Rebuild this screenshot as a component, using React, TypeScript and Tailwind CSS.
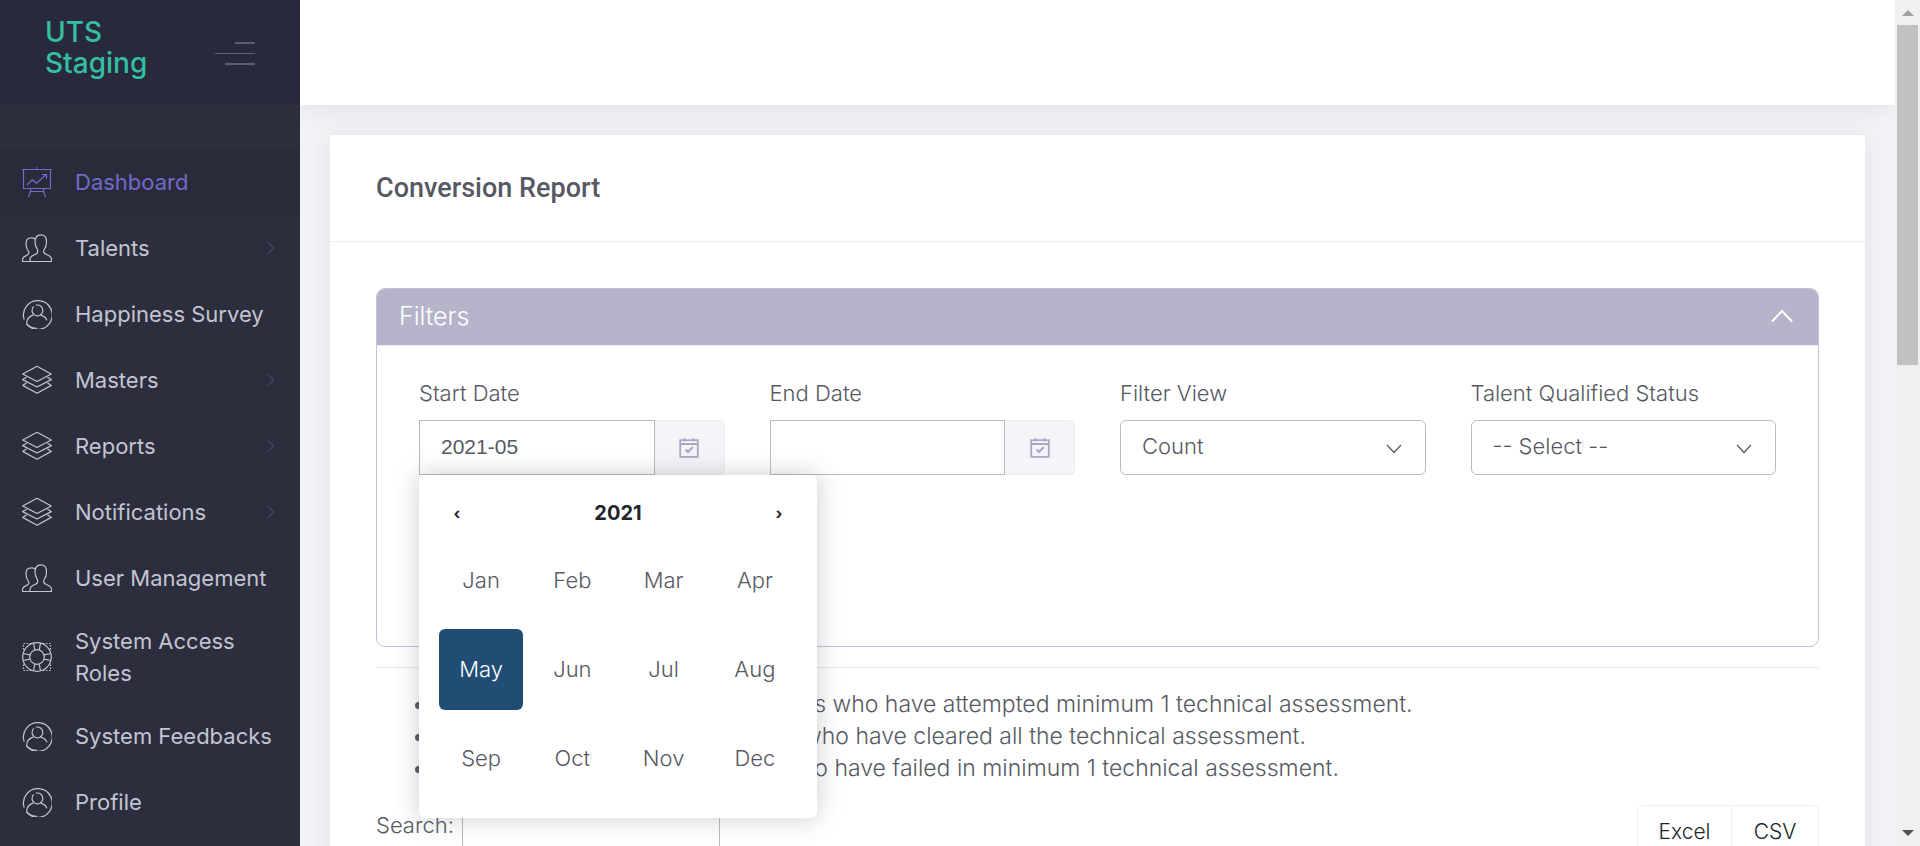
import React from "react";

type IconProps = { className?: string };

function Svg({ children, className }: { children: React.ReactNode; className?: string }) {
  return (
    <svg
      viewBox="0 0 30 30"
      width="30"
      height="30"
      fill="none"
      stroke="currentColor"
      strokeWidth="1.2"
      strokeLinejoin="round"
      aria-hidden="true"
      className={className}
    >
      {children}
    </svg>
  );
}

const BoardIcon = ({ className }: IconProps) => (
  <Svg className={className}>
    <path d="M0 2.5H30M1.5 2.5V21.5H28.5V2.5M14 1H16" />
    <path d="M5 18L9.5 13.5Q10.5 12.5 11.5 13.5L13.5 15.5Q14.5 16.5 15.5 15.5L24 7.5M20 7.5H24.5V12" />
    <path d="M8.5 21.5V24.5H21.5V21.5M8.5 24.5L6.5 30M21.5 24.5L23.5 30" />
  </Svg>
);

const UsersIcon = ({ className }: IconProps) => (
  <Svg className={className}>
    <path d="M8 28.5H29.5V26.5C29.5 24 27 22.5 24.5 21.5C22 20.5 21 19 22 17C23.5 15 24.5 12.5 24.5 9C24.5 4 23 1.8 18.8 1.8C14.5 1.8 13 4 13 9C13 12.5 14.5 15 15.5 17C16.3 19 15.5 20.5 13 21.5C10 22.7 8 23.5 8 26Z" />
    <path d="M8 28.5H0.5V26.5C0.5 24 2.5 23.3 4.5 22.5C6.5 21.5 7.3 20 6.5 18.5C5 16.5 4 14 4 10.5C4 6.5 6 4.8 9.5 4.8C11 4.8 12 5 13.2 5.8" />
  </Svg>
);

const UserCircleIcon = ({ className }: IconProps) => (
  <Svg className={className}>
    <path d="M2.2 20.6A14.4 14.4 0 1 1 4.6 25C4.6 20.5 7.5 17.2 11.2 16.2" />
    <path d="M4.6 25A14.4 14.4 0 0 0 15 29.4" />
    <path d="M18.8 16.2C21.6 17 24 18.8 25 21.4" />
    <path d="M14 6.2A5.4 5.4 0 1 1 11.8 7.4" />
  </Svg>
);

const LayersIcon = ({ className }: IconProps) => (
  <Svg className={className}>
    <path d="M15 1.3L29.3 9L15 16.5L0.7 9Z" />
    <path d="M4.6 12.2L0.7 14.6L15 22L29.3 14.6L25.4 12.2" />
    <path d="M4.6 17.8L0.7 20.4L15 28.2L29.3 20.4L25.4 17.8" />
  </Svg>
);

const LifebuoyIcon = ({ className }: IconProps) => (
  <Svg className={className}>
    <circle cx="15" cy="15" r="14.3" />
    <circle cx="15" cy="15" r="7.3" />
    <path d="M11.5 1.2L12.8 8M18.5 1.2L17.2 8M11.5 28.8L12.8 22M18.5 28.8L17.2 22M1.2 11.5L8 12.8M1.2 18.5L8 17.2M28.8 11.5L22 12.8M28.8 18.5L22 17.2" />
    <path
      strokeDasharray="1.5 1.5"
      d="M9 1.5H1.5V9M21 1.5H28.5V9M9 28.5H1.5V21M21 28.5H28.5V21"
    />
  </Svg>
);

const ChevronRight = () => (
  <svg viewBox="0 0 8 12" width="8" height="12" fill="none" stroke="currentColor" aria-hidden="true">
    <path d="M1 0.5L6.5 6L1 11.5" />
  </svg>
);

const ChevronDown = () => (
  <svg
    viewBox="0 0 16 10"
    width="16"
    height="10"
    fill="none"
    stroke="#575962"
    strokeWidth="1.2"
    aria-hidden="true"
    className="pointer-events-none absolute top-6 right-6"
  >
    <path d="M1 1L8 8.5L15 1" />
  </svg>
);

const CalendarIcon = () => (
  <svg viewBox="0 0 20 20" width="20" height="20" fill="none" stroke="#a9a7c4" strokeWidth="1.8" aria-hidden="true">
    <path d="M1.2 2.2H18.8V18.8H1.2ZM1 6H19M5.5 0V3.5M14.5 0V3.5" />
    <path strokeWidth="2" d="M6.5 11.5L9 14L13.8 9" />
  </svg>
);

type NavItem = { label: string; icon: React.ComponentType<IconProps>; arrow?: boolean; active?: boolean };

const navItems: NavItem[] = [
  { label: "Dashboard", icon: BoardIcon, active: true },
  { label: "Talents", icon: UsersIcon, arrow: true },
  { label: "Happiness Survey", icon: UserCircleIcon },
  { label: "Masters", icon: LayersIcon, arrow: true },
  { label: "Reports", icon: LayersIcon, arrow: true },
  { label: "Notifications", icon: LayersIcon, arrow: true },
  { label: "User Management", icon: UsersIcon },
  { label: "System Access Roles", icon: LifebuoyIcon },
  { label: "System Feedbacks", icon: UserCircleIcon },
  { label: "Profile", icon: UserCircleIcon },
];

function Sidebar() {
  return (
    <aside className="flex w-[300px] shrink-0 flex-col bg-[#2c2e3e]">
      <div className="flex h-[105px] shrink-0 items-start justify-between bg-[#282a3c] pr-[45px] pl-[45px]">
        <a href="#home" className="w-[120px] pt-[17px] text-[28px] leading-[31px] font-medium text-[#34bfa3]">
          UTS Staging
        </a>
        <button type="button" aria-label="Toggle menu" className="mt-[42px] flex w-10 flex-col items-end text-[#5d5c75]">
          <span className="h-0.5 w-5 bg-current" />
          <span className="mt-[9px] h-px w-10 bg-current" />
          <span className="mt-[9px] h-0.5 w-[30px] bg-current" />
        </button>
      </div>
      <nav className="pt-[45px]">
        <ul>
          {navItems.map(({ label, icon: Icon, arrow, active }) => (
            <li key={label}>
              <a
                href={`#${label.toLowerCase().replace(/ /g, "-")}`}
                className={
                  active
                    ? "flex min-h-[66px] items-center bg-[#292b3a] pt-[13px] pb-[15px] pr-[25px] pl-[22px] text-[#716aca]"
                    : "flex min-h-[66px] items-center pt-[13px] pb-[15px] pr-[25px] pl-[22px] text-[#c3c4d2]"
                }
              >
                <Icon className="shrink-0" />
                <span
                  className={
                    label === "System Access Roles"
                      ? "ml-[23px] w-[175px] text-[22px] leading-8"
                      : "ml-[23px] flex-1 text-[22px] leading-8 whitespace-nowrap"
                  }
                >
                  {label}
                </span>
                {arrow && (
                  <span className="text-[#525672]">
                    <ChevronRight />
                  </span>
                )}
              </a>
            </li>
          ))}
        </ul>
      </nav>
    </aside>
  );
}

const months = ["Jan", "Feb", "Mar", "Apr", "May", "Jun", "Jul", "Aug", "Sep", "Oct", "Nov", "Dec"];

function MonthPicker() {
  return (
    <div className="absolute top-full left-0 z-10 w-[398px] rounded-md bg-white px-5 pt-3 pb-[19px] shadow-[0_0_23px_1px_rgba(69,65,78,0.25)]">
      <div className="flex h-[52px] items-center justify-between px-3 text-[#212529]">
        <button type="button" aria-label="Previous year" className="w-3 text-[16px] font-bold">
          ‹
        </button>
        <button type="button" className="text-[20px] font-bold">
          2021
        </button>
        <button type="button" aria-label="Next year" className="w-3 text-[16px] font-bold">
          ›
        </button>
      </div>
      <div className="grid grid-cols-4 gap-x-[7px] gap-y-2 pt-px">
        {months.map((m) => (
          <button
            type="button"
            key={m}
            className={
              m === "May"
                ? "h-[81px] rounded-md bg-[#204d74] text-white"
                : "h-[81px] rounded-md font-light text-[#575962]"
            }
          >
            {m}
          </button>
        ))}
      </div>
    </div>
  );
}

function DateField({ id, label, value, open }: { id: string; label: string; value: string; open?: boolean }) {
  return (
    <div>
      <label htmlFor={id} className="block leading-8">
        {label}
      </label>
      <div className="relative mt-[11px] flex h-[55px]">
        <input
          id={id}
          defaultValue={value}
          className="min-w-0 flex-1 border border-[#b9bac6] bg-white px-[21px] pb-0.5 font-['Liberation_Sans',sans-serif] text-[21px] font-normal text-[#575962] outline-none"
        />
        <button
          type="button"
          aria-label={`Open ${label} calendar`}
          className="flex w-[70px] shrink-0 items-center justify-center rounded-r-md border border-l-0 border-[#ebedf2] bg-[#f4f5f8]"
        >
          <CalendarIcon />
        </button>
        {open && <MonthPicker />}
      </div>
    </div>
  );
}

function SelectField({ id, label, option }: { id: string; label: string; option: string }) {
  return (
    <div>
      <label htmlFor={id} className="block leading-8">
        {label}
      </label>
      <div className="relative mt-[11px]">
        <select
          id={id}
          className="h-[55px] w-full appearance-none rounded-md border border-[#b9bac6] bg-white px-[21px] pb-0.5 font-light outline-none"
        >
          <option>{option}</option>
        </select>
        <ChevronDown />
      </div>
    </div>
  );
}

function NoteList() {
  return (
    <ul className="mt-5 list-disc pl-[60px] text-[23px] leading-8 whitespace-nowrap">
      <li>
        <span className="inline-block w-[390px] text-right">Talents</span> who have attempted minimum 1 technical
        assessment.
      </li>
      <li>
        <span className="inline-block w-[367px]" />
        who have cleared all the technical assessment.
      </li>
      <li>
        <span className="inline-block w-[346px]" />
        who have failed in minimum 1 technical assessment.
      </li>
    </ul>
  );
}

function Scrollbar() {
  return (
    <div className="flex w-[25px] shrink-0 flex-col items-center bg-[#f0f0f0] pb-2.5" aria-hidden="true">
      <svg viewBox="0 0 12 6" width="12" height="6" className="mt-[10px] mb-[9px] shrink-0" fill="#a0a0a0">
        <path d="M0 6L6 0L12 6Z" />
      </svg>
      <div className="h-[340px] w-[21px] shrink-0 bg-[#c1c1c1]" />
      <svg viewBox="0 0 12 6" width="12" height="6" className="mt-auto shrink-0" fill="#505050">
        <path d="M0 0L6 6L12 0Z" />
      </svg>
    </div>
  );
}

export default function App() {
  return (
    <div className="flex h-screen overflow-hidden bg-[#f2f3f8] font-[Inter,sans-serif] text-[22px] text-[#575962]">
      <Sidebar />
      <div className="flex min-w-0 flex-1 flex-col overflow-hidden">
        <header className="h-[105px] shrink-0 bg-white shadow-[0_1px_23px_1px_rgba(69,65,78,0.1)]" />
        <main className="p-[30px]">
          <section className="bg-white shadow-[0_1px_23px_1px_rgba(69,65,78,0.08)]">
            <div className="flex h-[107px] items-center border-b border-[#ebedf2] px-[46px]">
              <h1 className="font-[Roboto,sans-serif] text-[27px] font-medium">Conversion Report</h1>
            </div>
            <div className="px-[46px] pt-[46px] pb-12 font-light">
              <div className="rounded-[9px] border border-[#c4c3d7]">
                <button
                  type="button"
                  className="flex h-[57px] w-full items-center justify-between rounded-t-lg border-b border-[#ebedf2] bg-[#b5b4cb] pr-6 pl-[22px] text-left text-[25px] text-white"
                >
                  <span>Filters</span>
                  <svg viewBox="0 0 24 16" width="24" height="16" fill="none" stroke="white" strokeWidth="2" aria-hidden="true">
                    <path d="M2 12.5L12 2L22 12.5" />
                  </svg>
                </button>
                <div className="grid min-h-[300px] grid-cols-4 content-start gap-x-[45px] px-[42px] pt-[31px]">
                  <DateField id="start-date" label="Start Date" value="2021-05" open />
                  <DateField id="end-date" label="End Date" value="" />
                  <SelectField id="filter-view" label="Filter View" option="Count" />
                  <SelectField id="qualified-status" label="Talent Qualified Status" option="-- Select --" />
                </div>
              </div>
              <hr className="mt-5 border-[#e4e5ea]" />
              <NoteList />
              <div className="mt-[21px] flex items-start justify-between">
                <div className="flex items-start gap-2">
                  <label htmlFor="search" className="pt-1 leading-8">
                    Search:
                  </label>
                  <input id="search" className="h-[46px] w-[258px] rounded-md border border-[#b9bac6] px-3" />
                </div>
                <div className="flex text-[21px] text-[#212529]">
                  <button type="button" className="h-[54px] w-[95px] rounded-l-md border border-[#ebedf2]">
                    Excel
                  </button>
                  <button type="button" className="h-[54px] w-[87px] rounded-r-md border border-l-0 border-[#ebedf2]">
                    CSV
                  </button>
                </div>
              </div>
            </div>
          </section>
        </main>
      </div>
      <Scrollbar />
    </div>
  );
}
